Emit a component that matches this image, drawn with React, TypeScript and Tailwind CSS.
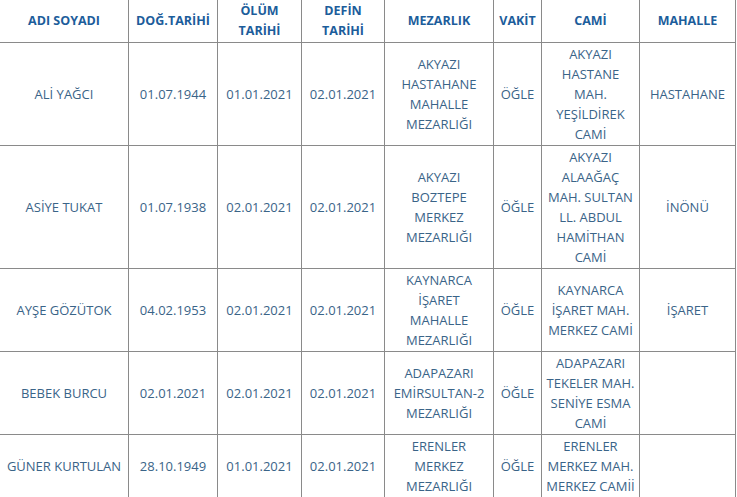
const headers: string[][] = [
  ['ADI SOYADI'],
  ['DOĞ.TARİHİ'],
  ['ÖLÜM', 'TARİHİ'],
  ['DEFİN', 'TARİHİ'],
  ['MEZARLIK'],
  ['VAKİT'],
  ['CAMİ'],
  ['MAHALLE'],
];

const rows: string[][][] = [
  [
    ['ALİ YAĞCI'],
    ['01.07.1944'],
    ['01.01.2021'],
    ['02.01.2021'],
    ['AKYAZI', 'HASTAHANE', 'MAHALLE', 'MEZARLIĞI'],
    ['ÖĞLE'],
    ['AKYAZI', 'HASTANE', 'MAH.', 'YEŞİLDİREK', 'CAMİ'],
    ['HASTAHANE'],
  ],
  [
    ['ASİYE TUKAT'],
    ['01.07.1938'],
    ['02.01.2021'],
    ['02.01.2021'],
    ['AKYAZI', 'BOZTEPE', 'MERKEZ', 'MEZARLIĞI'],
    ['ÖĞLE'],
    ['AKYAZI', 'ALAAĞAÇ', 'MAH. SULTAN', 'LL. ABDUL', 'HAMİTHAN', 'CAMİ'],
    ['İNÖNÜ'],
  ],
  [
    ['AYŞE GÖZÜTOK'],
    ['04.02.1953'],
    ['02.01.2021'],
    ['02.01.2021'],
    ['KAYNARCA', 'İŞARET', 'MAHALLE', 'MEZARLIĞI'],
    ['ÖĞLE'],
    ['KAYNARCA', 'İŞARET MAH.', 'MERKEZ CAMİ'],
    ['İŞARET'],
  ],
  [
    ['BEBEK BURCU'],
    ['02.01.2021'],
    ['02.01.2021'],
    ['02.01.2021'],
    ['ADAPAZARI', 'EMİRSULTAN-2', 'MEZARLIĞI'],
    ['ÖĞLE'],
    ['ADAPAZARI', 'TEKELER MAH.', 'SENİYE ESMA', 'CAMİ'],
    [],
  ],
  [
    ['GÜNER KURTULAN'],
    ['28.10.1949'],
    ['01.01.2021'],
    ['02.01.2021'],
    ['ERENLER', 'MERKEZ', 'MEZARLIĞI'],
    ['ÖĞLE'],
    ['ERENLER', 'MERKEZ MAH.', 'MERKEZ CAMİİ'],
    [],
  ],
];

function Cell({ lines, head }: { lines: string[]; head?: boolean }) {
  return (
    <div
      className={`flex flex-col items-center justify-center text-center py-px leading-5 border-r border-b border-[#8a8a8a] ${
        head ? 'font-bold text-[12.5px] text-[#1c5d9b]' : 'text-[13px] text-[#3a6488]'
      }`}
    >
      {lines.map((l, i) => (
        <span key={i} className="whitespace-nowrap">
          {l}
        </span>
      ))}
    </div>
  );
}

export default function App() {
  return (
    <div className="w-[737px] h-[497px] overflow-hidden bg-white" style={{ fontFamily: '"Open Sans", sans-serif' }}>
      <div className="grid grid-cols-[129px_89px_84px_83px_109px_48px_98px_96px]">
        {headers.map((h, i) => (
          <Cell key={'h' + i} lines={h} head />
        ))}
        {rows.map((r, ri) =>
          r.map((c, ci) => <Cell key={ri + '-' + ci} lines={c} />)
        )}
      </div>
    </div>
  );
}
